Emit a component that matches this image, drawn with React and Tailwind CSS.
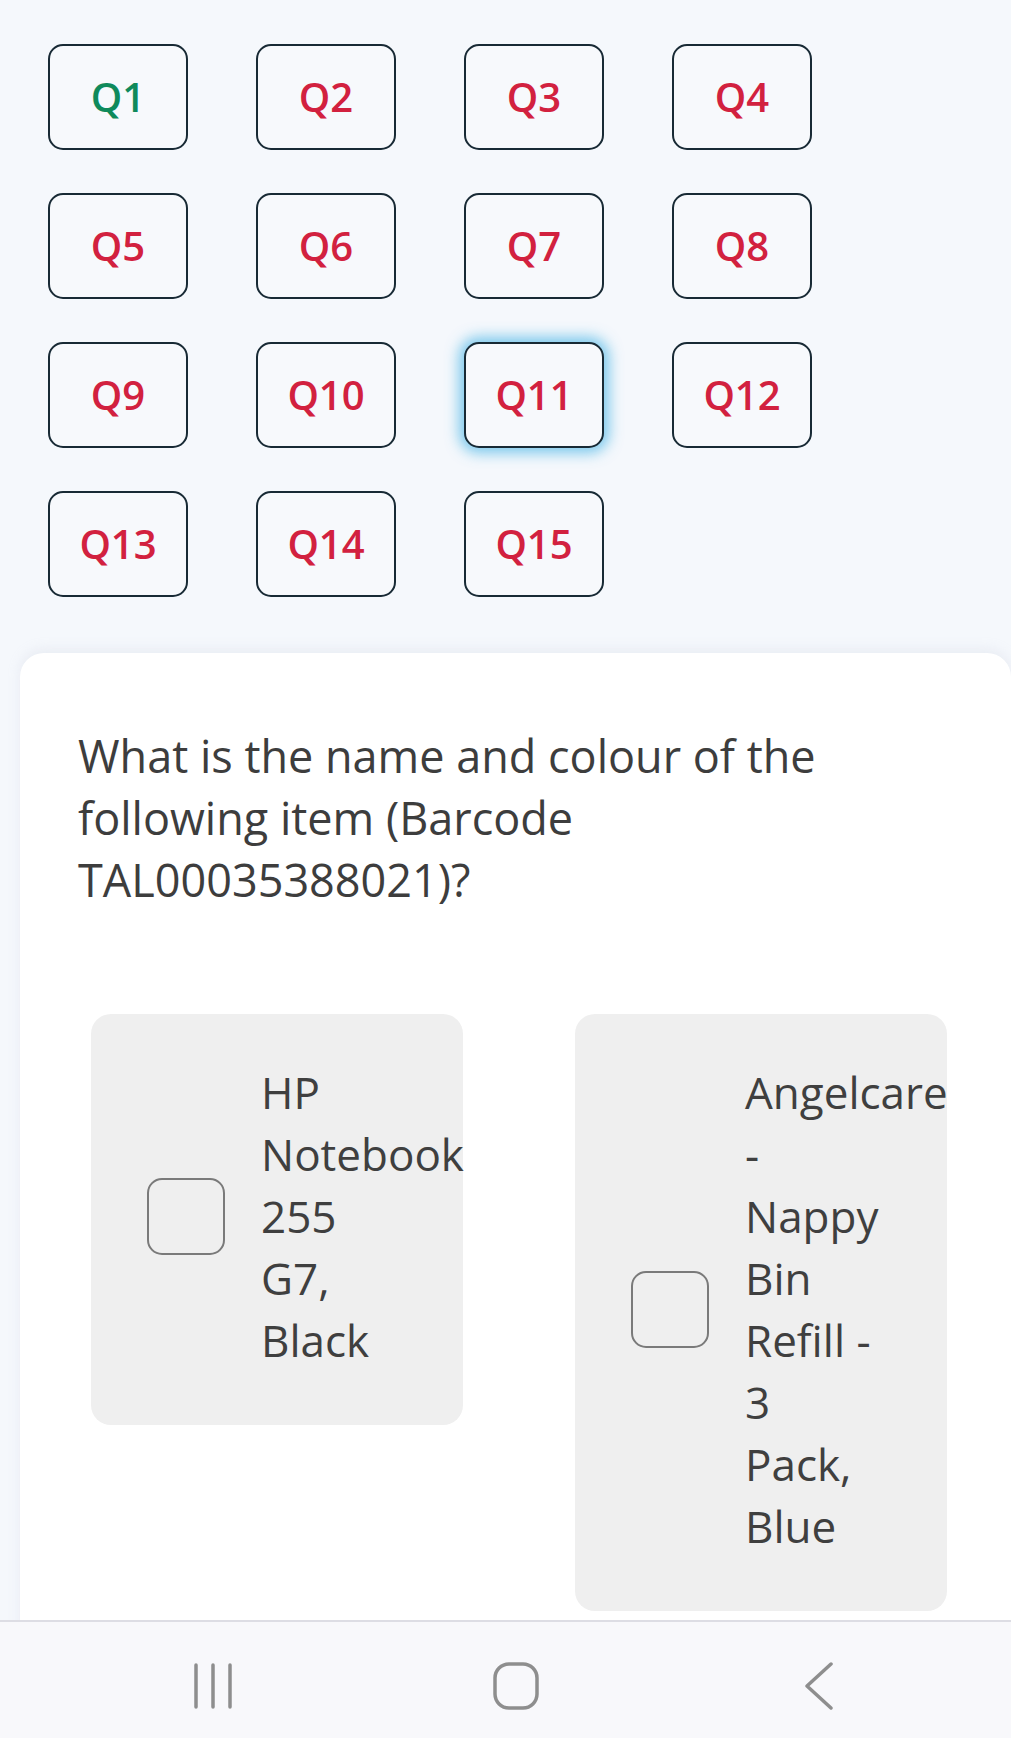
import { useState } from "react";

const questions = Array.from({ length: 15 }, (_, i) => "Q" + (i + 1));

const answers = [
  { id: "a", words: "HP Notebook 255 G7, Black" },
  { id: "b", words: "Angelcare - Nappy Bin Refill - 3 Pack, Blue" },
];

const QuestionButton = ({ label, answered, focused }) => {
  return (
    <button
      className={
        "h-[106px] w-[140px] rounded-[15px] border-2 border-[#182a35] bg-[#f7f9fc] text-[40px] font-semibold leading-none " +
        (answered ? "text-[#0f8a5b] " : "text-[#d2213f] ") +
        (focused ? "shadow-[0_0_14px_5px_rgba(70,180,230,0.7)]" : "")
      }
    >
      {label}
    </button>
  );
};

const Answer = ({ text, checked, onToggle }) => {
  return (
    <div
      onClick={onToggle}
      className="flex w-[372px] items-center gap-[36px] rounded-[20px] bg-[#efefef] pb-[54px] pl-[56px] pt-[47px]"
    >
      <div className="h-[77px] w-[78px] shrink-0 rounded-[15px] border-2 border-[#7a7a7a]">
        {checked && <div className="m-[14px] h-[45px] rounded-[8px] bg-[#0f8a5b]" />}
      </div>
      <span className="w-[134px] text-[44px] leading-[62px] text-[#3f3f3f]">{text}</span>
    </div>
  );
};

const App = () => {
  const [selected, setSelected] = useState(null);

  return (
    <div className="flex h-[1738px] flex-col overflow-hidden bg-[#f5f8fc] font-['Open_Sans',sans-serif]">
      <div className="h-[1620px] overflow-hidden">
        <div className="grid grid-cols-[repeat(4,140px)] gap-x-[68px] gap-y-[43px] pl-[48px] pt-[44px]">
          {questions.map((q, i) => (
            <QuestionButton key={q} label={q} answered={i === 0} focused={i === 10} />
          ))}
        </div>

        <div className="ml-[20px] mt-[56px] rounded-t-[24px] bg-white pb-[80px] shadow-[0_-4px_12px_rgba(200,205,220,0.25)]">
          <p className="max-w-[840px] pl-[58px] pt-[72px] text-[45px] leading-[62px] text-[#3d3d3d]">
            What is the name and colour of the following item (Barcode TAL00035388021)?
          </p>
          <div className="mt-[103px] flex items-start gap-[112px] pl-[71px]">
            {answers.map((a) => (
              <Answer
                key={a.id}
                text={a.words}
                checked={selected === a.id}
                onToggle={() => setSelected(a.id)}
              />
            ))}
          </div>
        </div>
      </div>

      <div className="flex h-[118px] items-start border-t-2 border-[#dddde4] bg-[#f8f8fb] pl-[20px] pt-[40px]">
        <div className="flex w-full justify-center">
          <div className="flex w-[303px] justify-center">
            <svg width="40" height="48" viewBox="0 0 40 48" fill="none" stroke="#8e8e8e" strokeWidth="3.5" strokeLinecap="round">
              <line x1="3" y1="3" x2="3" y2="45" />
              <line x1="20" y1="3" x2="20" y2="45" />
              <line x1="37" y1="3" x2="37" y2="45" />
            </svg>
          </div>
          <div className="flex w-[303px] justify-center">
            <svg width="46" height="48" viewBox="0 0 46 48" fill="none" stroke="#8e8e8e" strokeWidth="3.5">
              <rect x="2" y="2" width="42" height="44" rx="14" />
            </svg>
          </div>
          <div className="flex w-[303px] justify-center">
            <svg width="30" height="48" viewBox="0 0 30 48" fill="none" stroke="#8e8e8e" strokeWidth="3.5" strokeLinecap="round" strokeLinejoin="round">
              <polyline points="27,2 3,24 27,46" />
            </svg>
          </div>
        </div>
      </div>
    </div>
  );
};

export default App;
